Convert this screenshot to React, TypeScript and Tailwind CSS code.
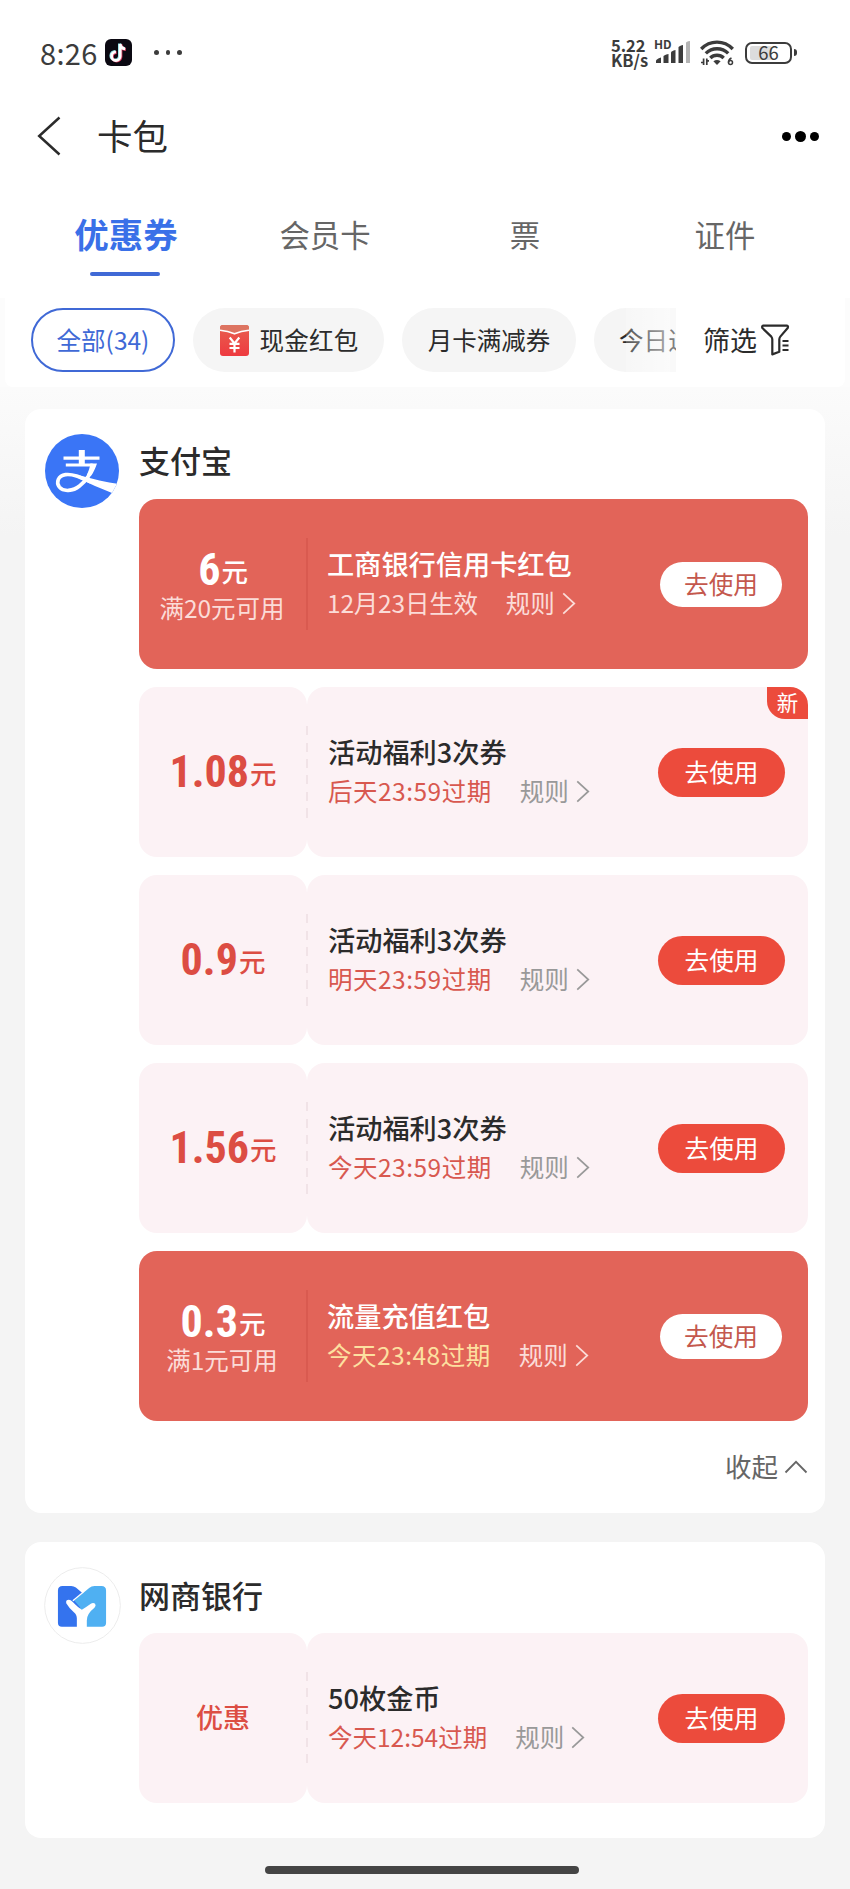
import React from 'react';

type Coupon = {
  id: string;
  amount: string;
  unit?: string;
  condition?: string;
  title: string;
  expire: string;
  expireClass?: string;
  urgent?: boolean;
  variant: 'solid' | 'light';
  isNew?: boolean;
};

type Shop = {
  id: string;
  name: string;
  logo: React.ReactNode;
  coupons: Coupon[];
  collapsible?: boolean;
};

const tabs = [
  { id: 'coupon', label: '优惠券' },
  { id: 'member', label: '会员卡' },
  { id: 'ticket', label: '票' },
  { id: 'cert', label: '证件' },
];

function AlipayLogo() {
  return (
    <svg viewBox="0 0 74 74" className="w-[74px] h-[74px]" fill="none">
      <defs>
        <clipPath id="alipay-clip">
          <circle cx="37" cy="37" r="37" />
        </clipPath>
      </defs>
      <circle cx="37" cy="37" r="37" fill="#3a75f6" />
      <g clipPath="url(#alipay-clip)">
        <path d="M18.5 24.2h36" stroke="#fff" strokeWidth="3.2" />
        <path d="M20.8 31h26" stroke="#fff" strokeWidth="3.2" />
        <path d="M36.8 16v15" stroke="#fff" strokeWidth="6" />
        <path
          d="M48.6 30C46.5 38 41 47 34.5 52C28 57.3 18.5 58 14.4 53.2C10.8 48.5 13 41.5 20.5 40.6C28 39.6 36 43.5 46 48"
          stroke="#fff"
          strokeWidth="3.6"
        />
        <path d="M45.4 29.4h6.6c-1.6 5-3.6 9-6.2 12.8l-4-1.2c1.8-3.6 3-7.4 3.6-11.6Z" fill="#fff" />
        <path d="M35 41.5C48 45 62 48.5 75 50L67 59C56 54.5 44 49.5 33 44Z" fill="#fff" />
      </g>
    </svg>
  );
}

function MybankLogo() {
  return (
    <svg viewBox="130 200 232 232" className="w-[77px] h-[77px]" fill="none">
      <circle cx="246" cy="316" r="114" fill="#fff" stroke="#ececec" strokeWidth="3" />
      <path
        d="M186 257h26q8 0 14 5l24 20v98h-66q-12 0-12-12v-97q0-14 14-14Z"
        fill="#3473ee"
      />
      <path
        d="M221 301l45-38q7-6 16-6h21q14 0 14 14v97q0 12-12 12h-66v-58Z"
        fill="#4fb0f2"
      />
      <path d="M217 302l31-26" stroke="#fff" strokeWidth="4" />
      <path
        d="M197 309q-2-10 8-10q5 0 11 6q16 17 28 24q12-7 27-18q7-5 13 0q4 6-2 12q-23 18-23 38v20h-30v-26q0-12-9-19q-13-10-23-27Z"
        fill="#fff"
      />
    </svg>
  );
}

function TiktokIcon() {
  const note = 'M15.2 5v12.2a4.3 4.3 0 1 1-4.3-4.3M15.2 5c.3 3 2.3 4.7 5 4.9';
  return (
    <svg viewBox="0 0 27 27" className="w-[27px] h-[27px] ml-2" fill="none">
      <rect width="27" height="27" rx="6" fill="#0b0912" />
      <path d={note} stroke="#8fe3ea" strokeWidth="3" transform="translate(-.7 -.5)" />
      <path d={note} stroke="#d5345a" strokeWidth="3" transform="translate(.7 .5)" />
      <path d={note} stroke="#fff" strokeWidth="2.8" />
    </svg>
  );
}

function SignalIcon() {
  return (
    <svg viewBox="0 0 36 24" className="w-[36px] h-[24px]" fill="#3c3c3c">
      <path d="M1 20q0-2 5-3.500V22H1Z" />
      <path d="M8.500 15.500q0-1.500 5-2.500v9h-5Z" />
      <path d="M16 11.500q0-1.500 4.500-2.500v13H16Z" />
      <path d="M23.500 6.500q0-1.500 4.500-2.500v18h-4.500Z" />
      <path d="M31 2q0-1.500 4-2v22h-4Z" fill="#b4b4b4" />
    </svg>
  );
}

function WifiIcon() {
  return (
    <svg viewBox="0 0 34 26" className="w-[34px] h-[26px]" fill="none">
      <g stroke="#3c3c3c" strokeWidth="3.4">
        <path d="M1.200 9C10-.2 24-.2 32.800 9" />
        <path d="M5.800 13.400c6.300-6.200 16.200-6.200 22.400 0" />
        <path d="M10.300 18c3.700-3.600 9.700-3.600 13.400 0" />
      </g>
      <path d="M13.400 21.200q3.600-2.600 7.200 0L17 25Z" fill="#3c3c3c" />
      <path d="M3.600 18.500v6.500M1 22.500h2.600M6.800 25v-6.500M9 20.800H6.800" stroke="#3c3c3c" strokeWidth="1.700" />
      <path d="M31.500 18q-3 1.200-3 4.500" stroke="#3c3c3c" strokeWidth="1.600" />
      <circle cx="30.500" cy="22.500" r="2" stroke="#3c3c3c" strokeWidth="1.500" />
    </svg>
  );
}

function RedPacketIcon() {
  return (
    <svg viewBox="0 0 29 31" className="w-[29px] h-[31px]" fill="none">
      <defs>
        <linearGradient id="packet" x1="0" y1="0" x2="0" y2="1">
          <stop offset="0" stopColor="#e8604f" />
          <stop offset="1" stopColor="#ee3a40" />
        </linearGradient>
      </defs>
      <rect width="29" height="31" rx="3" fill="url(#packet)" />
      <path d="M0 5.500V3Q0 0 3 0h23Q29 0 29 3V5.500Q14.500 10 0 5.500Z" fill="#dd7461" />
      <path d="M0 5.200Q8 6 14.500 8.800Q21 6 29 5.200" stroke="#fff" strokeWidth="1.600" />
      <path
        d="M9.700 12.500l4.800 6 4.800-6M14.500 18.500V27.500M9.500 18.800h10M9.500 23h10"
        stroke="#fff"
        strokeWidth="2.200"
      />
    </svg>
  );
}

function FilterIcon() {
  return (
    <svg viewBox="0 0 29 32" className="w-[29px] h-[32px] ml-1" fill="none" stroke="#2b2b2b" strokeWidth="2.2">
      <path
        d="M2.300 1.600h23.500q1.800.4.900 2.400l-7.400 8.600q-1 1.200-1 2.800v12.400l-7 2.600V15.400q0-1.600-1-2.800L1.400 4q-.8-2 .9-2.400Z"
        strokeLinejoin="round"
      />
      <path d="M21.500 17h6M21.500 21.500h6M21.500 26h6" strokeWidth="1.800" />
    </svg>
  );
}

function StatusBar() {
  return (
    <div className="h-[88px] pt-[4px] pl-10 pr-[53px] flex items-center justify-between text-[#3c3c3c]">
      <div className="flex items-center pt-[13px]">
        <span className="text-[29px] leading-[30px] w-[57px] -mt-[2px] tracking-[0.3px]">8:26</span>
        <TiktokIcon />
        <div className="flex items-center gap-[7px] ml-[22px]">
          <span className="w-[4.5px] h-[4.5px] rounded-full bg-[#3c3c3c]" />
          <span className="w-[4.5px] h-[4.5px] rounded-full bg-[#3c3c3c]" />
          <span className="w-[4.5px] h-[4.5px] rounded-full bg-[#3c3c3c]" />
        </div>
      </div>
      <div className="flex items-center pt-[13px]">
        <div className="text-[16.5px] leading-[15px] font-bold w-[43px]">
          <div>5.22</div>
          <div>KB/s</div>
        </div>
        <div className="relative pl-[1px] w-[46px]">
          <SignalIcon />
          <span className="absolute left-0 -top-[3px] text-[12px] leading-[12px] font-bold">HD</span>
        </div>
        <WifiIcon />
        <div className="ml-[11px] w-[47px] h-[22px] rounded-[7px] border-2 border-[#3c3c3c] flex items-center justify-center relative">
          <span className="absolute left-[3px] top-[2px] w-[22px] h-[14px] rounded-[2px] bg-[#dcdcdc]" />
          <span className="relative text-[18.5px] leading-[18px] -mt-[1px]">66</span>
        </div>
        <span className="ml-[2px] w-[3px] h-[7px] rounded-r bg-[#3c3c3c]" />
      </div>
    </div>
  );
}

function Header() {
  return (
    <div className="h-24 pl-[37px] pr-[31px] flex items-center">
      <svg viewBox="0 0 24 40" className="w-6 h-10" fill="none" stroke="#2b2b2b" strokeWidth="2.5">
        <path d="M22.500 1.500L2.200 20l20.300 18.500" />
      </svg>
      <h1 className="ml-[36px] flex-1 text-[35.5px] leading-[48px] text-[#2b2b2b] -mt-[2px]">卡包</h1>
      <div className="flex items-center gap-1 pt-[1px]">
        <span className="w-[9px] h-[9px] rounded-full bg-black" />
        <span className="w-[11px] h-[11px] rounded-full bg-black" />
        <span className="w-[9px] h-[9px] rounded-full bg-black" />
      </div>
    </div>
  );
}

function Tabs() {
  return (
    <div className="grid grid-cols-4 px-[25px] h-[114px]">
      {tabs.map((tab, i) => (
        <button key={tab.id} type="button" className="flex flex-col items-center pt-[24px]">
          {i === 0 ? (
            <>
              <span className="text-[34.5px] leading-[50px] font-bold text-[#3a70e8] pl-[2px]">{tab.label}</span>
              <span className="mt-[14px] w-[70px] h-[4px] rounded-full bg-[#4069d6]" />
            </>
          ) : (
            <span className="text-[30.4px] leading-[52px] text-[#666]">{tab.label}</span>
          )}
        </button>
      ))}
    </div>
  );
}

function FilterBar() {
  return (
    <div className="bg-[#fcfcfc] px-[5px]">
      <div className="h-[89px] pt-[10px] pl-[26px] bg-white rounded-b-lg flex items-start text-[24.5px] leading-[61px] text-[#2b2b2b]">
        <div className="flex gap-[18px] w-[645px] h-16 overflow-hidden relative">
          <button type="button" className="shrink-0 w-36 h-16 rounded-full border-2 border-[#4069d6] text-[#4069d6] flex items-center justify-center">
            <span className="h-[62px]">全部(34)</span>
          </button>
          <button type="button" className="shrink-0 w-[191px] h-16 rounded-full bg-[#f5f5f5] flex items-center justify-center gap-[11px] pl-[1px]">
            <RedPacketIcon />
            <span className="h-[62px] tracking-[0.2px]">现金红包</span>
          </button>
          <button type="button" className="shrink-0 w-[174px] h-16 rounded-full bg-[#f5f5f5] flex items-center justify-center">
            <span className="h-[62px]">月卡满减券</span>
          </button>
          <button type="button" className="shrink-0 w-[174px] h-16 pl-[25px] rounded-full bg-[#f5f5f5] flex items-center">
            <span className="h-[62px]">今日过</span>
          </button>
          <span className="absolute right-[6px] top-0 w-[44px] h-16 bg-gradient-to-r from-white/20 to-white/60" />
          <span className="absolute right-0 top-0 w-[6px] h-16 bg-white/40" />
        </div>
        <div className="pl-[27px] h-16 flex items-center">
          <span className="text-[27px] h-[62px]">筛选</span>
          <FilterIcon />
        </div>
      </div>
    </div>
  );
}

function CouponCard({ coupon }: { coupon: Coupon }) {
  const solid = coupon.variant === 'solid';

  return (
    <div className={`relative h-[170px] flex rounded-[18px] ${solid ? 'bg-[#e26459] text-white' : ''}`}>
      <div
        className={`w-[168px] shrink-0 rounded-[18px] flex flex-col items-center ${
          solid ? 'pt-[47px]' : 'pt-[61px] bg-[#fcf2f5] text-[#dc4d43]'
        }`}
      >
        {coupon.unit ? (
          <div className="h-[45px] flex items-baseline pt-[1px]">
            <span className="font-['Roboto'] [font-stretch:80%] font-bold text-[44px] leading-[46px]">{coupon.amount}</span>
            <span className="relative -top-[3px] ml-[1px] text-[26.5px] leading-[30px] font-medium">{coupon.unit}</span>
          </div>
        ) : (
          <div className="text-[27px] leading-[45px] font-medium">{coupon.amount}</div>
        )}
        {coupon.condition && (
          <div className="text-[24.5px] leading-[34px] text-[#fbdcd8] pr-[2px]">{coupon.condition}</div>
        )}
      </div>

      {/* 中间分割线 */}
      {solid ? (
        <span className="absolute left-[167px] top-[39px] w-[2px] h-[92px] bg-[#d95a50]" />
      ) : (
        <span className="absolute left-[167px] top-[39px] w-[2px] h-[92px] bg-[repeating-linear-gradient(#f1e3e7_0_9px,#fcf2f5_9px_16.500px)]" />
      )}

      <div
        className={`flex-1 rounded-[18px] flex items-center justify-between ${
          solid ? 'pl-[20px] pr-[26px]' : 'pl-[21px] pr-[23px] bg-[#fcf2f5]'
        }`}
      >
        <div className="-mt-[4px]">
          <div className={`text-[27.2px] leading-[40px] font-medium ${solid ? '' : 'text-[#2b2b2b]'}`}>
            {coupon.title}
          </div>
          <div className="flex items-center text-[24.5px] leading-[39px]">
            <span
              className={`${coupon.expireClass ?? ''} ${
                solid ? (coupon.urgent ? 'text-[#fde0a0]' : 'text-[#fbdcd8]') : 'text-[#d8584f]'
              }`}
            >
              {coupon.expire}
            </span>
            <span className={`ml-[28px] ${solid ? 'text-[#fbdcd8]' : 'text-[#999]'}`}>规则</span>
            <svg
              viewBox="0 0 14 24"
              className={`w-[14px] h-[23px] ml-[7px] mt-[2px] ${solid ? 'text-[#fbdcd8]' : 'text-[#999]'}`}
              fill="none"
              stroke="currentColor"
              strokeWidth="1.8"
            >
              <path d="M1 1.500L12.500 12 1 22.500" />
            </svg>
          </div>
        </div>
        <button
          type="button"
          className={`rounded-full flex items-center justify-center text-[24.7px] ${
            solid
              ? 'w-[122px] h-[45px] bg-white text-[#c4584d]'
              : 'w-[127px] h-[49px] bg-[#ec4b3c] text-white'
          }`}
        >
          <span className="leading-[40px] -mt-[3px]">去使用</span>
        </button>
      </div>

      {coupon.isNew && (
        <span className="absolute right-0 top-0 w-[41px] h-8 rounded-tr-[18px] rounded-bl-[18px] bg-[#ec4b3c] text-white text-[21.5px] leading-[29px] text-center">
          新
        </span>
      )}
    </div>
  );
}

const shops: Shop[] = [
  {
    id: 'alipay',
    name: '支付宝',
    logo: <AlipayLogo />,
    collapsible: true,
    coupons: [
      { id: 'c1', amount: '6', unit: '元', condition: '满20元可用', title: '工商银行信用卡红包', expire: '12月23日生效', expireClass: 'tracking-[-0.2px]', variant: 'solid' },
      { id: 'c2', amount: '1.08', unit: '元', title: '活动福利3次券', expire: '后天23:59过期', expireClass: 'tracking-[0.5px]', variant: 'light', isNew: true },
      { id: 'c3', amount: '0.9', unit: '元', title: '活动福利3次券', expire: '明天23:59过期', expireClass: 'tracking-[0.5px]', variant: 'light' },
      { id: 'c4', amount: '1.56', unit: '元', title: '活动福利3次券', expire: '今天23:59过期', expireClass: 'tracking-[0.5px]', variant: 'light' },
      { id: 'c5', amount: '0.3', unit: '元', condition: '满1元可用', title: '流量充值红包', expire: '今天23:48过期', expireClass: 'tracking-[0.5px]', urgent: true, variant: 'solid' },
    ],
  },
  {
    id: 'mybank',
    name: '网商银行',
    logo: <MybankLogo />,
    coupons: [
      { id: 'm1', amount: '优惠', title: '50枚金币', expire: '今天12:54过期', variant: 'light' },
    ],
  },
];

function ShopCard({ shop }: { shop: Shop }) {
  return (
    <section className={`bg-white rounded-[16px] pr-[17px] flex ${shop.collapsible ? 'h-[1104px]' : 'h-[296px]'}`}>
      <div className="w-[114px] shrink-0 flex justify-center items-start pt-[25px]">{shop.logo}</div>
      <div className="flex-1">
        <h2
          className={`text-[31px] leading-[46px] font-medium text-[#2b2b2b] ${
            shop.collapsible ? 'pt-[28px] h-[90px]' : 'pt-[30px] h-[91px]'
          }`}
        >
          {shop.name}
        </h2>
        <div className="flex flex-col gap-[18px]">
          {shop.coupons.map((coupon) => (
            <CouponCard key={coupon.id} coupon={coupon} />
          ))}
        </div>
        {shop.collapsible && (
          <button type="button" className="w-full h-[90px] flex items-center justify-end text-[26.5px] text-[#666]">
            <span className="leading-[40px] -mt-[1px]">收起</span>
            <svg viewBox="0 0 24 14" className="w-6 h-[14px] ml-[6px] mt-[2px]" fill="none" stroke="#666" strokeWidth="1.8">
              <path d="M1.500 12.500L12 1.800l10.500 10.700" />
            </svg>
          </button>
        )}
      </div>
    </section>
  );
}

export default function App() {
  return (
    <div className="w-[850px] h-[1889px] overflow-hidden bg-[#f4f4f4] flex flex-col font-['Noto_Sans_CJK_SC','Noto_Sans',sans-serif]">
      <div className="bg-white">
        <StatusBar />
        <Header />
        <Tabs />
        <FilterBar />
      </div>
      <main className="flex-1 px-[25px] pt-[22px] flex flex-col gap-[29px] bg-[linear-gradient(#fbfbfb,#f4f4f4_150px)]">
        {shops.map((shop) => (
          <ShopCard key={shop.id} shop={shop} />
        ))}
        <div className="ml-[240px] -mt-[1px] w-[314px] h-2 rounded-full bg-[#444]" />
      </main>
    </div>
  );
}
